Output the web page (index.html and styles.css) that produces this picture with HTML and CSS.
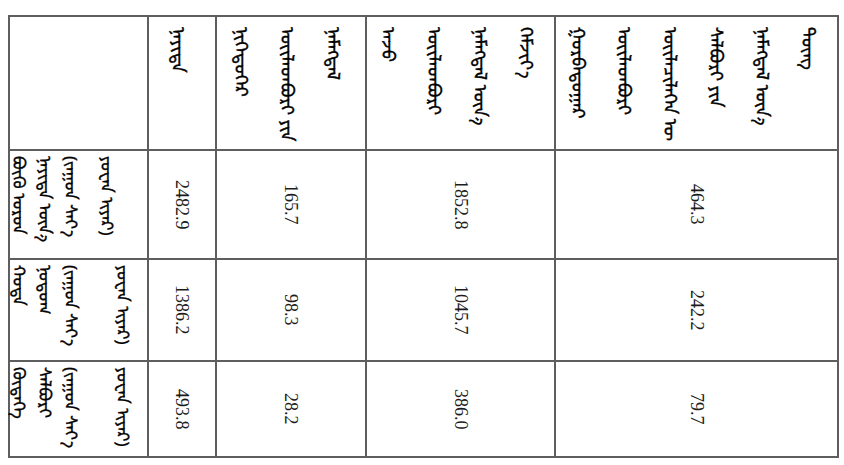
FILE: index.html
```html
<!DOCTYPE html>
<html lang="mn">
<head>
<meta charset="utf-8">
<title>ᠬᠦᠰᠦᠨᠦᠭ</title>
<link rel="stylesheet" href="styles.css">
</head>
<body>
<div class="page">
<table class="data">
  <colgroup>
    <col class="c-label">
    <col class="c-total">
    <col class="c-one">
    <col class="c-two">
    <col class="c-three">
  </colgroup>
  <tr class="r-head">
    <td class="corner"></td>
    <td class="head"><div class="v">ᠨᠡᠶᠢᠲᠡ</div></td>
    <td class="head"><div class="v">ᠨᠢᠭᠡᠳᠦᠭᠡᠷ<br>ᠦᠢᠯᠡᠳᠪᠦᠷᠢ ᠶᠢᠨ<br>ᠨᠡᠮᠡᠭᠳᠡᠯ</div></td>
    <td class="head"><div class="v">ᠠᠵᠤ<br>ᠦᠢᠯᠡᠳᠪᠦᠷᠢ<br>ᠨᠡᠮᠡᠭᠳᠡᠯ ᠦᠨ᠎ᠡ<br>ᠬᠡᠮᠵᠢᠶ᠎ᠡ</div></td>
    <td class="head"><div class="v">ᠭᠤᠷᠪᠠᠳᠤᠭᠠᠷ<br>ᠦᠢᠯᠡᠳᠪᠦᠷᠢ<br>ᠦᠢᠯᠡᠴᠢᠯᠡᠭᠡᠨ ᠦ<br>ᠰᠠᠯᠪᠤᠷᠢ ᠶᠢᠨ<br>ᠨᠡᠮᠡᠭᠳᠡᠯ ᠦᠨ᠎ᠡ<br>ᠳᠦᠩ</div></td>
  </tr>
  <tr class="r-one">
    <td class="label"><div class="v"><span class="ln">ᠪᠦᠬᠦ ᠣᠷᠤᠨ</span><span class="ln">ᠨᠡᠶᠢᠲᠡ ᠦᠨ᠎ᠡ</span><span class="ln">(ᠵᠠᠭᠤᠨ ᠰᠠᠶ᠎ᠠ</span><span class="ln end-near">ᠶᠤᠸᠠᠨ ᠢᠶᠠᠷ)</span></div></td>
    <td class="num"><div class="v">2482.9</div></td>
    <td class="num"><div class="v">165.7</div></td>
    <td class="num"><div class="v">1852.8</div></td>
    <td class="num"><div class="v">464.3</div></td>
  </tr>
  <tr class="r-two">
    <td class="label"><div class="v"><span class="ln">ᠬᠣᠲᠠ</span><span class="ln">ᠨᠤᠲᠤᠭ</span><span class="ln">(ᠵᠠᠭᠤᠨ ᠰᠠᠶ᠎ᠠ</span><span class="ln end-far">ᠶᠤᠸᠠᠨ ᠢᠶᠠᠷ)</span></div></td>
    <td class="num"><div class="v">1386.2</div></td>
    <td class="num"><div class="v">98.3</div></td>
    <td class="num"><div class="v">1045.7</div></td>
    <td class="num"><div class="v">242.2</div></td>
  </tr>
  <tr class="r-three">
    <td class="label"><div class="v"><span class="ln">ᠬᠥᠳᠡᠭᠡ</span><span class="ln">ᠰᠠᠯᠪᠤᠷᠢ</span><span class="ln">(ᠵᠠᠭᠤᠨ ᠰᠠᠶ᠎ᠠ</span><span class="ln end-far">ᠶᠤᠸᠠᠨ ᠢᠶᠠᠷ)</span></div></td>
    <td class="num"><div class="v">493.8</div></td>
    <td class="num"><div class="v">28.2</div></td>
    <td class="num"><div class="v">386.0</div></td>
    <td class="num"><div class="v">79.7</div></td>
  </tr>
</table>
</div>
</body>
</html>
```

FILE: styles.css
```css
html, body {
  margin: 0;
  background: #ffffff;
}

.page {
  padding: 15px 0 0 8px;
}

.data {
  border-collapse: collapse;
  table-layout: fixed;
  width: 829px;
  font-family: "Noto Sans Mongolian", "Liberation Serif", serif;
  color: #111111;
}

.c-label { width: 139px; }
.c-total { width: 68px; }
.c-one { width: 150px; }
.c-two { width: 189px; }
.c-three { width: 283px; }

.data td {
  border: 2px solid #5e5e5e;
  padding: 0;
  line-height: 0;
}

.r-head { height: 134px; }
.r-one { height: 109px; }
.r-two { height: 102px; }
.r-three { height: 96px; }

.v {
  writing-mode: vertical-lr;
  display: inline-block;
  vertical-align: top;
}

.num {
  text-align: center;
  vertical-align: middle;
}

.num .v {
  font-family: "Liberation Serif", serif;
  font-size: 18px;
  line-height: 22px;
  vertical-align: middle;
  color: #1c1c1c;
}

.head {
  text-align: center;
  vertical-align: top;
}

.data td.head {
  padding-top: 10px;
}

.head .v {
  font-size: 18px;
  line-height: 46px;
  text-align: start;
  color: #000;
  -webkit-text-stroke: 0.4px #000;
}

.label {
  text-align: left;
  vertical-align: top;
}

.data td.label {
  padding-top: 5px;
}

.label .v {
  font-size: 17px;
  line-height: 26px;
  color: #000;
  -webkit-text-stroke: 0.35px #000;
}

.ln {
  display: block;
}

.end-near { margin-left: 10px; }
.end-far { margin-left: 26px; }
```
